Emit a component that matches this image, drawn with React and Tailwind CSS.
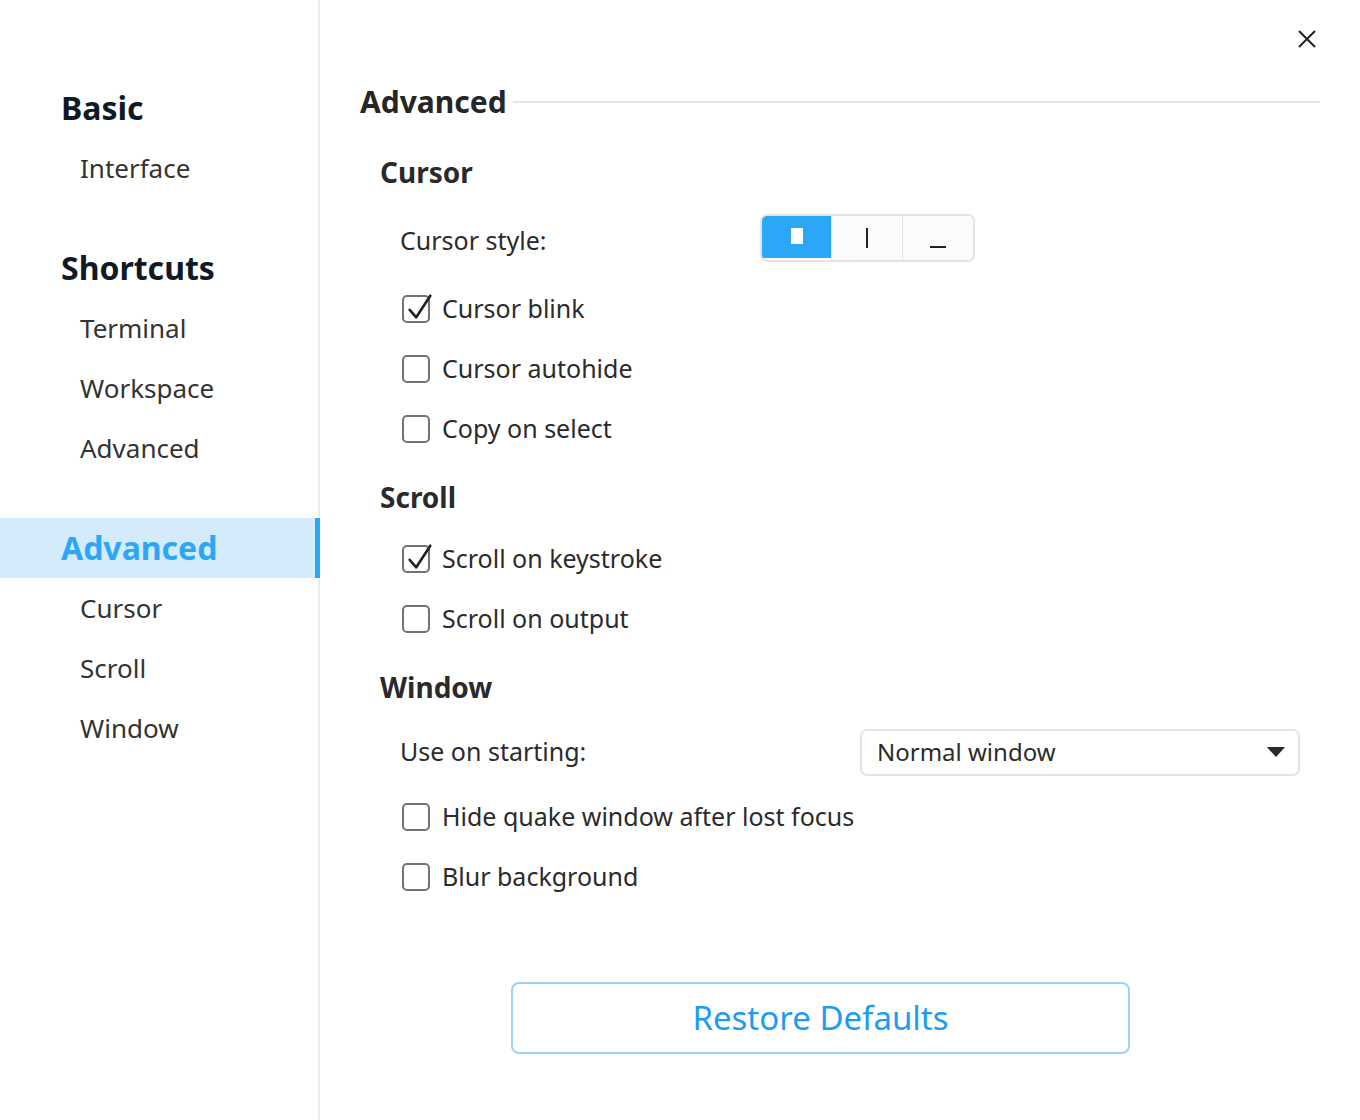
import { useState } from 'react';

const font = { fontFamily: '"Noto Sans", "Open Sans", sans-serif' };

const nav = [
  { type: 'group', label: 'Basic' },
  { type: 'item', label: 'Interface' },
  { type: 'gap' },
  { type: 'group', label: 'Shortcuts' },
  { type: 'item', label: 'Terminal' },
  { type: 'item', label: 'Workspace' },
  { type: 'item', label: 'Advanced' },
  { type: 'gap' },
  { type: 'group', label: 'Advanced', active: true },
  { type: 'item', label: 'Cursor' },
  { type: 'item', label: 'Scroll' },
  { type: 'item', label: 'Window' },
];

function Checkbox({ checked, label, className = '' }) {
  return (
    <label className={`flex items-center h-[60px] pl-[42px] gap-3 ${className}`}>
      <span className="w-[28px] h-[28px] shrink-0 rounded-[5px] border-2 border-[#737373] relative">
        {checked && (
          <svg viewBox="0 0 32 32" className="absolute w-[30px] h-[30px] -top-[5px] left-[1px]" fill="none">
            <path d="M5 19 L12 27 L27 4" stroke="#222" strokeWidth="2.8" strokeLinecap="round" strokeLinejoin="round" />
          </svg>
        )}
      </span>
      <span className="text-[25px] text-[#2b2b2b]">{label}</span>
    </label>
  );
}

function SubHeading({ children }) {
  return <div className="h-[60px] mt-[8px] flex items-center pl-[20px] text-[28px] font-bold text-[#2a2a2a]">{children}</div>;
}

export default function App() {
  const [cursor, setCursor] = useState(0);
  return (
    <div style={font} className="w-[1360px] h-[1120px] bg-white flex overflow-hidden">
      {/* Sidebar */}
      <div className="w-[320px] border-r-2 border-[#ececec] pt-[78px] flex flex-col">
        {nav.map((n, i) => {
          if (n.type === 'gap') return <div key={i} className="h-[40px]" />;
          if (n.type === 'group')
            return (
              <div
                key={i}
                className={`h-[60px] flex items-center pl-[61px] text-[32px] font-bold ${
                  n.active ? 'bg-[#d4ebfc] text-[#2ca7f8] border-r-[5px] border-[#2ca7f8] -mr-[2px]' : 'text-[#0f1a26]'
                }`}
              >
                {n.label}
              </div>
            );
          return (
            <div key={i} className="h-[60px] flex items-center pl-[80px] text-[26px] text-[#333]">
              {n.label}
            </div>
          );
        })}
      </div>

      {/* Content */}
      <div className="flex-1 relative pl-[40px] pr-[40px] pt-[68px]">
        <button className="absolute top-[28px] right-[42px] w-[22px] h-[22px] flex items-center justify-center">
          <svg viewBox="0 0 20 20" className="w-[20px] h-[20px]" stroke="#222" strokeWidth="2">
            <path d="M2 2 L18 18 M18 2 L2 18" />
          </svg>
        </button>

        <div className="flex items-center gap-[6px] h-[66px]">
          <span className="text-[30px] font-bold text-[#262626]">Advanced</span>
          <div className="flex-1 h-[2px] bg-[#e6e6e6] mt-[2px]" />
        </div>

        <SubHeading>Cursor</SubHeading>
        <div className="flex items-center h-[70px] mt-[4px] pl-[40px]">
          <span className="w-[360px] text-[25px] text-[#2b2b2b]">Cursor style:</span>
          <div className="flex h-[48px] -translate-y-[3px] rounded-[7px] border-2 border-[#e4e4e4] overflow-hidden">
            {[0, 1, 2].map((k) => (
              <button
                key={k}
                onClick={() => setCursor(k)}
                className={`w-[71px] h-full flex items-center justify-center ${
                  k > 0 ? 'border-l border-[#e6e6e6]' : ''
                } ${cursor === k ? 'bg-[#2ca7f8] -m-[2px] h-[48px] w-[73px]' : 'bg-[#fbfbfb]'}`}
              >
                {k === 0 && <span className={`w-[12px] h-[16px] ${cursor === 0 ? 'bg-white' : 'bg-[#222]'}`} />}
                {k === 1 && <span className={`w-[2px] h-[20px] ${cursor === 1 ? 'bg-white' : 'bg-[#222]'}`} />}
                {k === 2 && <span className={`w-[16px] h-[2px] mt-[18px] ${cursor === 2 ? 'bg-white' : 'bg-[#222]'}`} />}
              </button>
            ))}
          </div>
        </div>
        <Checkbox checked label="Cursor blink" className="mt-[3px]" />
        <Checkbox label="Cursor autohide" />
        <Checkbox label="Copy on select" />

        <SubHeading>Scroll</SubHeading>
        <Checkbox checked label="Scroll on keystroke" className="mt-[2px]" />
        <Checkbox label="Scroll on output" />

        <SubHeading>Window</SubHeading>
        <div className="flex items-center h-[70px] pl-[40px] mr-[20px]">
          <span className="w-[460px] text-[25px] text-[#2b2b2b]">Use on starting:</span>
          <div className="flex-1 h-[47px] rounded-[7px] border-2 border-[#e4e4e4] flex items-center justify-between pl-[15px] pr-[12px]">
            <span className="text-[24px] text-[#2b2b2b]">Normal window</span>
            <svg viewBox="0 0 20 12" className="w-[20px] h-[11px]">
              <path d="M0 0 H20 L10 11 Z" fill="#2b2b2b" />
            </svg>
          </div>
        </div>
        <Checkbox label="Hide quake window after lost focus" />
        <Checkbox label="Blur background" />

        <div className="flex pl-[151px] mt-[75px]">
          <button className="w-[619px] h-[72px] rounded-[8px] border-2 border-[#9fd0f7] text-[33px] text-[#1d9cf0]">
            Restore Defaults
          </button>
        </div>
      </div>
    </div>
  );
}
